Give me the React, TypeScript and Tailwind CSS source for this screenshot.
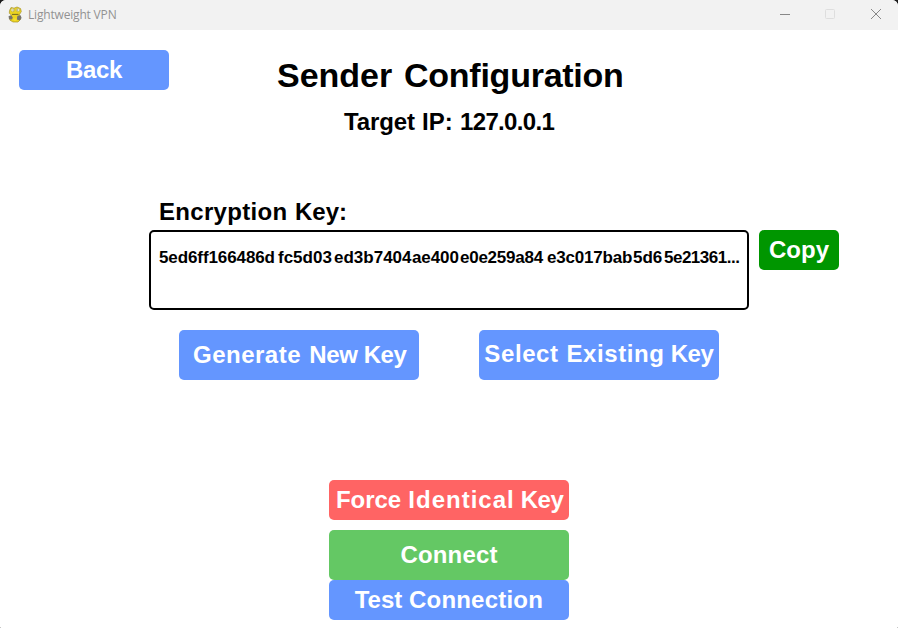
import React from "react";

type Word = [text: string, width: string, spacing?: string];

function Words({ words }: { words: Word[] }) {
  return (
    <span className="flex whitespace-nowrap">
      {words.map(([text, width, spacing], i) => (
        <span key={i} className={`block shrink-0 ${width} ${spacing ?? ""}`}>
          {text}
        </span>
      ))}
    </span>
  );
}

function Button({ words, className }: { words: Word[]; className: string }) {
  return (
    <button className={`flex shrink-0 items-center rounded-[5px] text-white ${className}`}>
      <Words words={words} />
    </button>
  );
}

function SnakeIcon() {
  return (
    <svg width="16" height="18" viewBox="0 0 16 18">
      <path d="M2.5 4.5 4 1.5 7 2.2l3-1.2 3.5 1.5.8 3-1.8 3-.2 2 1.2 3-2.5 2.5H6L3 14.2l-.4-3L4.4 9 2.3 7.3z" fill="#ecd321" stroke="#a8942a" strokeWidth=".7" />
      <circle cx="5.7" cy="4" r="1.8" fill="#f5f3d5" stroke="#b5a432" strokeWidth=".6" />
      <circle cx="11" cy="4" r="1.8" fill="#f5f3d5" stroke="#b5a432" strokeWidth=".6" />
      <path d="M5.6 4h1M10.2 4h1M5 8.4h6.5" stroke="#655b22" strokeWidth=".9" />
      <path d="m1.6 10 2.8-.6 1.4 2-.8 2.2-3-.4zM10.4 9.8l3.2-.6 1 2.8-1.8 2.4-3-1z" fill="#77736b" />
      <path d="M6 12.5h4l-1 2.5H7z" fill="#f4df2d" />
    </svg>
  );
}

function TitleBar() {
  return (
    <header className="flex h-[30px] items-center bg-[#f2f2f2] pl-[7px] text-[#929292]">
      <SnakeIcon />
      <span className="ml-[5px] flex-1 whitespace-nowrap font-['Open_Sans','Noto_Sans',sans-serif] text-[12px] tracking-[-0.18px]">
        Lightweight VPN
      </span>
      <svg width="120" height="30" viewBox="0 0 120 30" fill="none">
        <path d="M2 14.5h10" stroke="#888" />
        <rect x="47.5" y="9.5" width="9" height="9" rx="1" stroke="#dedede" />
        <path d="m93 9 10 10M103 9 93 19" stroke="#888" />
      </svg>
    </header>
  );
}

export default function App() {
  return (
    <div className="h-[628px] w-[898px] overflow-hidden bg-[#1c1c1c]">
      <div className="h-full overflow-hidden rounded-t-[6px] rounded-b-[1px] bg-white font-['Liberation_Sans',Arial,sans-serif] text-[24px] font-bold leading-none text-black">
        <div className="font-normal">
          <TitleBar />
        </div>
        <main className="flex flex-col">
          <div className="flex h-[165px] items-start pl-[19px] pt-5">
            <Button className="h-10 w-[150px] bg-[#6496ff] pl-[45px]" words={[["Back", "w-[60px]", "tracking-[-0.3px]"]]} />
            <div className="pl-[108px] pt-2">
              <h1 className="text-[34px]">
                <Words words={[["Sender", "w-[127px]"], ["Configuration", "w-[224px]", "tracking-[-0.25px]"]]} />
              </h1>
              <h2 className="mt-[18px] pl-[67px]">
                <Words words={[["Target", "w-[78px]", "tracking-[-0.1px]"], ["IP:", "w-[38px]"], ["127.0.0.1", "w-[110px]", "tracking-[-0.65px]"]]} />
              </h2>
            </div>
          </div>
          <div className="h-[35px] pl-[159px] pt-[5px]">
            <Words words={[["Encryption", "w-[136px]", "tracking-[0.3px]"], ["Key:", "w-[60px]"]]} />
          </div>
          <div className="flex items-start gap-[10px] pl-[149px]">
            <div className="h-20 w-[600px] rounded-[5px] border-2 border-black pl-2 pt-[17px] text-[17px]">
              <Words
                words={[
                  ["5ed6ff166486d", "w-[119px]", "tracking-[-0.1px]"],
                  ["fc5d03", "w-[56px]"],
                  ["ed3b7404", "w-[78px]"],
                  ["ae400", "w-[48px]", "tracking-[-0.1px]"],
                  ["e0e259a84", "w-[87px]", "tracking-[-0.25px]"],
                  ["e3c017bab", "w-[86px]", "tracking-[-0.2px]"],
                  ["5d6", "w-[31px]"],
                  ["5e21361...", "w-[80px]", "tracking-[-0.5px]"],
                ]}
              />
            </div>
            <Button className="h-10 w-20 bg-[#009600] pl-[9px]" words={[["Copy", "w-[62px]"]]} />
          </div>
          <div className="flex gap-[60px] pl-[179px] pt-5">
            <Button
              className="h-[50px] w-60 bg-[#6496ff] pl-[10px]"
              words={[["Generate", "w-[116px]", "tracking-[0.5px]"], ["New", "w-[57px]", "tracking-[-0.3px]"], ["Key", "w-[46px]", "tracking-[-0.5px]"]]}
            />
            <Button
              className="h-[50px] w-60 bg-[#6496ff] pb-[2px] pl-[2px]"
              words={[["Select", "w-[81px]", "tracking-[0.6px]"], ["Existing", "w-[107px]", "tracking-[0.6px]"], ["Key", "w-[46px]", "tracking-[-0.5px]"]]}
            />
          </div>
          <div className="flex flex-col pl-[329px] pt-[100px]">
            <Button
              className="h-10 w-60 bg-[#ff6464] pl-1"
              words={[["Force", "w-[71px]", "tracking-[-0.1px]"], ["Identical", "w-[115px]", "tracking-[1px]"], ["Key", "w-[46px]", "tracking-[-0.5px]"]]}
            />
            <Button className="mt-[10px] h-[50px] w-60 bg-[#64c864] pl-[70px]" words={[["Connect", "w-[100px]", "tracking-[0.15px]"]]} />
            <Button className="h-10 w-60 bg-[#6496ff] pl-[22px]" words={[["Test", "w-[55px]"], ["Connection", "w-[140px]", "tracking-[0.2px]"]]} />
          </div>
        </main>
      </div>
    </div>
  );
}
